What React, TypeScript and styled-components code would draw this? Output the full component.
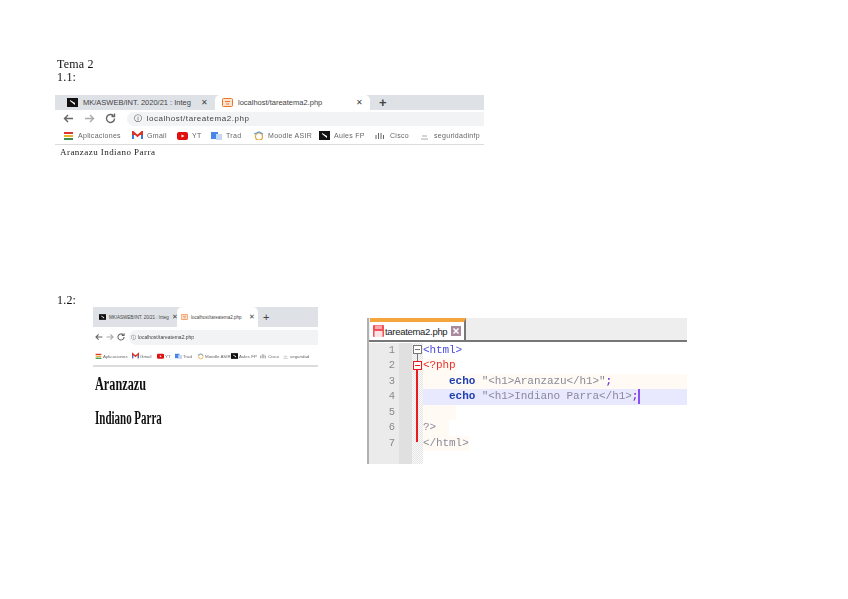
import React from "react";
import styled, { createGlobalStyle } from "styled-components";

const GlobalStyle = createGlobalStyle`
  html, body {
    margin: 0;
    padding: 0;
    background: #fff;
  }
`;

const Page = styled.div`
  width: 848px;
  height: 599px;
  overflow: hidden;
  box-sizing: border-box;
  padding-top: 58px;
  padding-left: 57px;
  font-family: "Liberation Serif", serif;
  color: #111;
`;

const Heading = styled.div`
  font-size: 12px;
  line-height: 13px;
  letter-spacing: 0.2px;
  filter: blur(0.3px);
`;

const SecondHeading = styled(Heading)`
  margin-top: 136px;
`;

const FirstShot = styled.div`
  margin: 11px 0 0 -2px;
`;

const SecondRow = styled.div`
  display: flex;
  align-items: flex-start;
  margin-left: 36px;
`;

const BrowserFrame = styled.div<{ $small?: boolean }>`
  width: ${(p) => (p.$small ? 225 : 429)}px;
  height: ${(p) => (p.$small ? 130 : 63)}px;
  overflow: hidden;
  font-family: "Liberation Sans", sans-serif;
  filter: blur(0.45px);
`;

const TabStrip = styled.div<{ $small?: boolean }>`
  display: flex;
  align-items: stretch;
  height: ${(p) => (p.$small ? 20 : 15)}px;
  background: #dee1e6;
`;

const Tab = styled.div<{ $w: number; $pad: number; $active?: boolean; $small?: boolean }>`
  display: flex;
  align-items: center;
  flex: none;
  box-sizing: border-box;
  width: ${(p) => p.$w}px;
  padding: 0 ${(p) => (p.$small ? 3 : 7)}px 0 ${(p) => p.$pad}px;
  gap: ${(p) => (p.$small ? 3 : 5)}px;
  background: ${(p) => (p.$active ? "#fff" : "transparent")};
  border-radius: 5px 5px 0 0;
  color: #444;
  font-size: ${(p) => (p.$small ? 4.5 : 7.5)}px;
  white-space: nowrap;
`;

const TabTitle = styled.span`
  flex: 1;
`;

const TabClose = styled.span<{ $small?: boolean }>`
  font-size: ${(p) => (p.$small ? 7 : 8)}px;
  color: #444;
`;

const NewTab = styled.span<{ $small?: boolean }>`
  margin-left: ${(p) => (p.$small ? 5 : 9)}px;
  align-self: center;
  font-size: ${(p) => (p.$small ? 11 : 13)}px;
  font-weight: ${(p) => (p.$small ? 400 : 700)};
  color: #444;
`;

const Toolbar = styled.div<{ $small?: boolean }>`
  display: flex;
  align-items: center;
  height: ${(p) => (p.$small ? 20 : 17)}px;
  padding-left: ${(p) => (p.$small ? 1 : 7)}px;
  gap: ${(p) => (p.$small ? 1 : 3)}px;
`;

const NavIcon = styled.svg<{ $small?: boolean; $faded?: boolean }>`
  flex: none;
  width: ${(p) => (p.$small ? 10 : 13)}px;
  height: ${(p) => (p.$small ? 10 : 13)}px;
  margin-right: ${(p) => (p.$small ? 0 : 5)}px;
  fill: none;
  stroke: ${(p) => (p.$faded ? "#aaa" : "#666")};
  stroke-width: 1.4;
`;

const AddressPill = styled.div<{ $small?: boolean }>`
  display: flex;
  align-items: center;
  flex: 1;
  height: ${(p) => (p.$small ? 15 : 14)}px;
  margin-left: ${(p) => (p.$small ? 2 : 2)}px;
  padding-left: ${(p) => (p.$small ? 2 : 7)}px;
  gap: ${(p) => (p.$small ? 2 : 4)}px;
  border-radius: 8px 0 0 8px;
  background: #f1f3f4;
  color: #444;
  font-size: ${(p) => (p.$small ? 5 : 8)}px;
  letter-spacing: ${(p) => (p.$small ? 0 : 0.55)}px;
  white-space: nowrap;
`;

const Bookmarks = styled.div<{ $small?: boolean }>`
  display: flex;
  align-items: center;
  height: ${(p) => (p.$small ? 18 : 17)}px;
  padding-left: ${(p) => (p.$small ? 2 : 8)}px;
  border-bottom: ${(p) => (p.$small ? 2 : 1)}px solid #dcdcdc;
`;

const Bookmark = styled.div<{ $w: number; $small?: boolean }>`
  display: flex;
  align-items: center;
  flex: none;
  width: ${(p) => p.$w}px;
  gap: ${(p) => (p.$small ? 1 : 4)}px;
  color: #666;
  font-size: ${(p) => (p.$small ? 4.4 : 7)}px;
  letter-spacing: ${(p) => (p.$small ? 0 : 0.3)}px;
  white-space: nowrap;
`;

const Favicon = styled.svg<{ $small?: boolean }>`
  flex: none;
  width: ${(p) => (p.$small ? 7 : 11)}px;
  height: ${(p) => (p.$small ? 8 : 9)}px;
`;

const TinyPage = styled.div`
  padding: 2px 0 0 5px;
  font-family: "Liberation Serif", serif;
  font-size: 9px;
  line-height: 10px;
  letter-spacing: 0.45px;
  color: #222;
`;

const BigName = styled.div<{ $w: number }>`
  width: 200px;
  margin: 9px 0 0 2px;
  font-family: "Liberation Serif", serif;
  font-size: 18px;
  font-weight: 700;
  line-height: 17px;
  color: #111;
  transform: scaleX(${(p) => p.$w});
  transform-origin: left center;

  & + & {
    margin-top: 17px;
  }
`;

const Editor = styled.div`
  flex: none;
  width: 320px;
  height: 146px;
  margin: 11px 0 0 49px;
  overflow: hidden;
  border-left: 2px solid #b0b0b0;
  box-sizing: border-box;
  filter: blur(0.35px);
`;

const EditorTabs = styled.div`
  height: 22px;
  padding-left: 1px;
  background: #eeeeee;
  border-bottom: 2px solid #777;
`;

const EditorTab = styled.div`
  display: flex;
  align-items: center;
  box-sizing: border-box;
  width: 96px;
  height: 22px;
  padding-left: 3px;
  gap: 1px;
  background: #fff;
  border-top: 4px solid #f4a63c;
  border-right: 2px solid #777;
  font-family: "Liberation Sans", sans-serif;
  font-size: 9.5px;
  letter-spacing: -0.3px;
  color: #222;
`;

const SaveIcon = styled.svg`
  flex: none;
  width: 11px;
  height: 12px;
`;

const CloseIcon = styled.svg`
  flex: none;
  width: 10px;
  height: 10px;
  margin-left: 3px;
`;

const EditorBody = styled.div`
  display: flex;
  height: 122px;
  padding-top: 1px;
`;

const LineNumbers = styled.div`
  flex: none;
  width: 43px;
  padding-right: 17px;
  box-sizing: border-box;
  background: linear-gradient(to right, #ebebeb 30px, #e0e0e0 30px);
  text-align: right;
  font-family: "Liberation Mono", monospace;
  font-size: 10.5px;
  line-height: 15.45px;
  color: #8a8a8a;
`;

const FoldMargin = styled.div`
  position: relative;
  flex: none;
  width: 11px;
  background: repeating-conic-gradient(#e4e4e4 0 25%, #fafafa 0 50%) 0 0 / 2px 2px;
`;

const FoldBox = styled.div<{ $red?: boolean; $top: number }>`
  position: absolute;
  left: 1px;
  top: ${(p) => p.$top}px;
  width: 9px;
  height: 9px;
  box-sizing: border-box;
  border: 1px solid ${(p) => (p.$red ? "#f01818" : "#777")};
  background: #fff;

  &::after {
    content: "";
    position: absolute;
    left: 1px;
    right: 1px;
    top: 3px;
    height: 1px;
    background: ${(p) => (p.$red ? "#f01818" : "#777")};
  }
`;

const FoldLine = styled.div<{ $red?: boolean; $top: number; $h: number }>`
  position: absolute;
  left: ${(p) => (p.$red ? 4 : 5)}px;
  top: ${(p) => p.$top}px;
  width: ${(p) => (p.$red ? 2 : 1)}px;
  height: ${(p) => p.$h}px;
  background: ${(p) => (p.$red ? "#e81c1c" : "#777")};
`;

const Code = styled.div`
  flex: 1;
  min-width: 0;
  font-family: "Liberation Mono", monospace;
  font-size: 11px;
  line-height: 15.45px;
  letter-spacing: -0.08px;
  white-space: pre;
  color: #8a8a9a;
`;

const CodeLine = styled.div<{ $bg?: string; $fit?: boolean }>`
  height: 15.45px;
  width: ${(p) => (p.$fit ? "fit-content" : "auto")};
  background: ${(p) => p.$bg || "transparent"};
`;

const Tag = styled.span`
  color: #4a4ae0;
`;

const Php = styled.span`
  color: #e8302a;
`;

const Keyword = styled.span`
  color: #1f3fb0;
  font-weight: 700;
`;

const Semi = styled.span`
  color: #7b2fd0;
  font-weight: 700;
`;

const Caret = styled.span`
  display: inline-block;
  width: 2px;
  height: 15px;
  vertical-align: top;
  background: #8a4ff0;
`;

const bookmarksWide = [
  { kind: "grid", label: "Aplicaciones", w: 69 },
  { kind: "gmail", label: "Gmail", w: 45 },
  { kind: "yt", label: "YT", w: 34 },
  { kind: "trad", label: "Trad", w: 42 },
  { kind: "moodle", label: "Moodle ASIR", w: 66 },
  { kind: "black", label: "Aules FP", w: 56 },
  { kind: "cisco", label: "Cisco", w: 44 },
  { kind: "lock", label: "seguridadinfp", w: 62 },
];

const bookmarksSmall = [
  { kind: "grid", label: "Aplicaciones", w: 37 },
  { kind: "gmail", label: "Gmail", w: 25 },
  { kind: "yt", label: "YT", w: 18 },
  { kind: "trad", label: "Trad", w: 22 },
  { kind: "moodle", label: "Moodle ASIR", w: 34 },
  { kind: "black", label: "Aules FP", w: 29 },
  { kind: "cisco", label: "Cisco", w: 22 },
  { kind: "lock", label: "seguridad", w: 36 },
];

const BookmarkIcon: React.FC<{ kind: string; small?: boolean }> = ({ kind, small }) => {
  const inner: Record<string, React.ReactNode> = {
    grid: (
      <>
        <rect x="1" y="1" width="9" height="2" fill="#d33" />
        <rect x="1" y="4" width="9" height="2" fill="#e9b32a" />
        <rect x="1" y="7" width="9" height="2" fill="#3a8f4a" />
      </>
    ),
    gmail: (
      <>
        <path d="M1 8V1l4.500 4L10 1v7" fill="none" stroke="#d8352a" strokeWidth="2" />
        <path d="M1 8V4M10 8V4" stroke="#3b78e0" strokeWidth="2" />
      </>
    ),
    yt: (
      <>
        <rect x="0" y="1" width="11" height="8" rx="2" fill="#e01010" />
        <path d="M4.500 3.500v3l3-1.500z" fill="#fff" />
      </>
    ),
    trad: (
      <>
        <rect x="0" y="1" width="7" height="7" fill="#4a86e8" />
        <rect x="5" y="3" width="6" height="6" fill="#c6d8f5" />
      </>
    ),
    moodle: (
      <>
        <circle cx="6" cy="5.500" r="3.500" fill="none" stroke="#e8a33a" strokeWidth="1.200" />
        <path d="M1 3l5-2 4 2" fill="none" stroke="#6aa0d0" strokeWidth="1.200" />
      </>
    ),
    black: (
      <>
        <rect x="0" y="0" width="11" height="9" fill="#111" />
        <path d="M3 2l5 3v2L3 3z" fill="#fff" />
      </>
    ),
    cisco: <path d="M1 8V4M3.500 8V2M6 8V2M8.500 8V4" stroke="#666" strokeWidth="1" />,
    lock: <path d="M2 8h7M3 5h5" stroke="#aaa" strokeWidth="1" />,
  };
  return (
    <Favicon $small={small} viewBox="0 0 11 9">
      {inner[kind]}
    </Favicon>
  );
};

const Nav: React.FC<{ small?: boolean }> = ({ small }) => (
  <>
    <NavIcon $small={small} viewBox="0 0 13 13">
      <path d="M11 6.500H2.500M6 3L2.500 6.500 6 10" />
    </NavIcon>
    <NavIcon $small={small} $faded viewBox="0 0 13 13">
      <path d="M2 6.500h8.500M7 3l3.500 3.500L7 10" />
    </NavIcon>
    <NavIcon $small={small} viewBox="0 0 13 13">
      <path d="M10.500 6.500a4 4 0 1 1-1.200-2.900M10.500 1.500v3h-3" />
    </NavIcon>
  </>
);

const Browser: React.FC<{ small?: boolean; children: React.ReactNode }> = ({ small, children }) => {
  const marks = small ? bookmarksSmall : bookmarksWide;
  return (
    <BrowserFrame $small={small}>
      <TabStrip $small={small}>
        <Tab $w={small ? 84 : 160} $pad={small ? 6 : 12} $small={small}>
          <BookmarkIcon kind="black" small={small} />
          <TabTitle>{small ? "MK/ASWEB/INT. 20/21 : Integ" : "MK/ASWEB/INT. 2020/21 : Integ"}</TabTitle>
          <TabClose $small={small}>✕</TabClose>
        </Tab>
        <Tab $w={small ? 81 : 155} $pad={small ? 4 : 7} $active $small={small}>
          <Favicon $small={small} viewBox="0 0 11 9">
            <rect x="0.500" y="0.500" width="10" height="8" rx="1" fill="#fbe3d0" stroke="#e8772e" />
            <path d="M3 3.500h5M4 6h3" stroke="#e8772e" />
          </Favicon>
          <TabTitle>localhost/tareatema2.php</TabTitle>
          <TabClose $small={small}>✕</TabClose>
        </Tab>
        <NewTab $small={small}>+</NewTab>
      </TabStrip>
      <Toolbar $small={small}>
        <Nav small={small} />
        <AddressPill $small={small}>
          <span>ⓘ</span>
          <span>localhost/tareatema2.php</span>
        </AddressPill>
      </Toolbar>
      <Bookmarks $small={small}>
        {marks.map((m) => (
          <Bookmark key={m.kind} $w={m.w} $small={small}>
            <BookmarkIcon kind={m.kind} small={small} />
            {m.label}
          </Bookmark>
        ))}
      </Bookmarks>
      {children}
    </BrowserFrame>
  );
};

export default function App() {
  return (
    <>
      <GlobalStyle />
      <Page>
        <Heading>Tema 2</Heading>
        <Heading>1.1:</Heading>
        <FirstShot>
          <Browser>
            <TinyPage>Aranzazu Indiano Parra</TinyPage>
          </Browser>
        </FirstShot>
        <SecondHeading>1.2:</SecondHeading>
        <SecondRow>
          <Browser small>
            <BigName $w={0.68}>Aranzazu</BigName>
            <BigName $w={0.61}>Indiano Parra</BigName>
          </Browser>
          <Editor>
            <EditorTabs>
              <EditorTab>
                <SaveIcon viewBox="0 0 11 12">
                  <rect x="0" y="0" width="11" height="12" rx="1" fill="#f0505a" />
                  <rect x="2" y="0.500" width="7" height="3.500" fill="#f9a8ac" />
                  <rect x="1.500" y="6" width="8" height="6" fill="#fde4e4" />
                </SaveIcon>
                tareatema2.php
                <CloseIcon viewBox="0 0 10 10">
                  <rect x="0" y="0" width="10" height="10" fill="#a88a9c" />
                  <path d="M2.500 2.500l5 5M7.500 2.500l-5 5" stroke="#fff" strokeWidth="1.500" />
                </CloseIcon>
              </EditorTab>
            </EditorTabs>
            <EditorBody>
              <LineNumbers>
                {[1, 2, 3, 4, 5, 6, 7].map((n) => (
                  <div key={n}>{n}</div>
                ))}
              </LineNumbers>
              <FoldMargin>
                <FoldLine $top={11} $h={7} />
                <FoldBox $top={2} />
                <FoldBox $top={18} $red />
                <FoldLine $top={27} $h={72} $red />
              </FoldMargin>
              <Code>
                <CodeLine>
                  <Tag>&lt;html&gt;</Tag>
                </CodeLine>
                <CodeLine $fit $bg="#fffbf4">
                  <Php>&lt;?php</Php>
                </CodeLine>
                <CodeLine $bg="#fffbf4">
                  {"    "}
                  <Keyword>echo</Keyword> "&lt;h1&gt;Aranzazu&lt;/h1&gt;"<Semi>;</Semi>
                </CodeLine>
                <CodeLine $bg="#e8e8ff">
                  {"    "}
                  <Keyword>echo</Keyword> "&lt;h1&gt;Indiano Parra&lt;/h1&gt;<Semi>;</Semi>
                  <Caret />
                </CodeLine>
                <CodeLine $fit $bg="#fffbf4">
                  {"     "}
                </CodeLine>
                <CodeLine $fit $bg="#fffbf4">
                  {"?>  "}
                </CodeLine>
                <CodeLine $fit $bg="#fffbf4">
                  &lt;/html&gt;
                </CodeLine>
              </Code>
            </EditorBody>
          </Editor>
        </SecondRow>
      </Page>
    </>
  );
}
